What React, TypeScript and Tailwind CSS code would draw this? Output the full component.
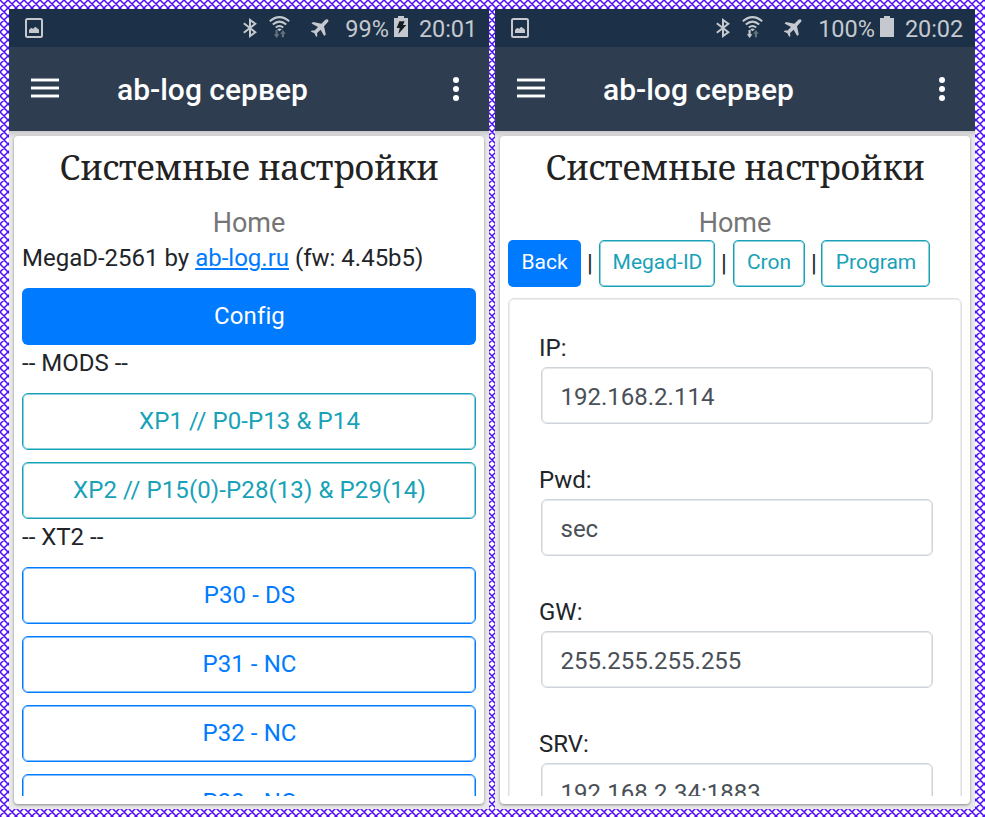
import type { ReactNode } from "react";

const info = "border border-[#17a2b8] text-[#17a2b8] shadow-[inset_0_0_0_1px_#17a2b880]";
const primary = "border border-[#007bff] text-[#007bff] shadow-[inset_0_0_0_1px_#007bff80]";

function Hatch() {
  return (
    <svg className="absolute inset-0 h-full w-full">
      <defs>
        <pattern id="hatch" width="8" height="8" patternUnits="userSpaceOnUse">
          <rect width="8" height="8" fill="#fff" />
          <path d="M-2 -2L10 10M10 -2L-2 10M-2 6L2 10M6 -2L10 2M-2 2L2 -2M6 10L10 6" stroke="#4d08ff" strokeWidth="1.5" />
        </pattern>
      </defs>
      <rect width="100%" height="100%" fill="url(#hatch)" />
    </svg>
  );
}

function PictureIcon() {
  return (
    <svg width="18" height="20" viewBox="0 0 18 20" fill="#c5c9cf">
      <rect x="1" y="1" width="16" height="18" rx="1.5" fill="none" stroke="#c5c9cf" strokeWidth="2" />
      <path d="M4 15v-3l2-2h1l1 1 2-2h1l1 1.5h1l1 1.5v3z" />
    </svg>
  );
}

function Bluetooth() {
  return (
    <svg width="14" height="20" viewBox="0 0 14 20" fill="none" stroke="#c5c9cf" strokeWidth="2">
      <path d="M.8 5.2L12.3 14.2 7 18V2L12.3 5.8.8 14.8" />
    </svg>
  );
}

function Wifi({ active }: { active: boolean }) {
  return (
    <svg width="21" height="22" viewBox="0 0 21 22" fill="none" stroke="#c5c9cf" strokeWidth="2">
      <path d="M.8 5.2Q10.5-3 20.2 5.2M3.8 8.6Q10.5 2.7 17.2 8.6M6.8 11.6Q10.5 8.4 14.2 11.6" />
      <path d="M8.2 13.2Q10.5 11.6 12.8 13.2L10.5 15.3z" fill="#c5c9cf" stroke="none" />
      <path d="M6.5 14h2.2v4.3h1.8L7.6 22 4.8 18.3h1.7z" fill={active ? "#c5c9cf" : "#64727f"} stroke="none" />
      <path d="M12.8 21.3h2.2v-3.6h1.8L13.9 14l-2.8 3.7h1.7z" fill="#64727f" stroke="none" />
    </svg>
  );
}

function Plane() {
  return (
    <svg width="19" height="18" viewBox="0 0 19 18" fill="#c5c9cf">
      <path d="M17.8.5Q19 1.4 17.9 3L14 7.2l1.8 8.3-1.6 1.6-3.6-6.4-3.5 3.4.2 2.8-1.1 1-1.8-3.6L.8 12.5l1-1.1 2.8.2L8 8.1 1.5 4.5l1.6-1.6 8.3 1.9L15.4.8Q16.8-.3 17.8.5z" />
    </svg>
  );
}

function Battery({ charging }: { charging: boolean }) {
  return (
    <svg width="14" height="21" viewBox="0 0 14 21" fill="#c5c9cf">
      <path d="M4 0h6v2h4v19H0V2h4z" />
      {charging && <path d="M5.4 5.2h5.3L8.9 9h3.4L4.4 18l1.3-5.9H2.6z" fill="#141c26" />}
    </svg>
  );
}

function Phone({ percent, time, charging, children }: { percent: string; time: string; charging: boolean; children: ReactNode }) {
  return (
    <section className="flex h-[800px] w-[480px] shrink-0 flex-col overflow-hidden bg-[#e9e9e9]">
      <div className="flex h-[38px] shrink-0 items-start bg-[#1c3147] pl-4 pr-3 text-[23.5px] leading-[38px] text-[#c5c9cf]">
        <div className="mr-auto pt-[9px]"><PictureIcon /></div>
        <div className="mr-3 pt-[9px]"><Bluetooth /></div>
        <div className="mr-5 pt-[7px]"><Wifi active={!charging} /></div>
        <div className="mr-4 pt-[10px]"><Plane /></div>
        <span className="mr-[5px] pt-px">{percent}</span>
        <div className="mr-[11px] pt-[7px]"><Battery charging={charging} /></div>
        <span className="pt-px tracking-[-0.1px]">{time}</span>
      </div>
      <header className="flex h-[84px] shrink-0 items-center bg-[#2e3e50] pl-[22px] pr-[30px] text-white">
        <svg width="28" height="22" viewBox="0 0 28 22" fill="#fff">
          <g fillOpacity=".45"><path d="M0 0h28v4H0zM0 8h28v4H0zM0 16h28v4H0z" /></g>
          <path d="M0 1h28v2H0zM0 9h28v2H0zM0 17h28v2H0z" />
        </svg>
        <h1 className="ml-[58px] mr-auto pt-[2px] text-[30px] font-medium leading-9">ab-log сервер</h1>
        <svg width="6" height="24" viewBox="0 0 6 24" fill="#fff">
          <circle cx="3" cy="3" r="3" /><circle cx="3" cy="12" r="3" /><circle cx="3" cy="21" r="3" />
        </svg>
      </header>
      <div className="min-h-0 flex-1 bg-linear-to-b from-[#c9c9c9] to-[#e9e9e9] to-[7px] px-[5px] pb-[5px] pt-[5px]">
        <main className="h-[668px] rounded-[4px] bg-white px-2 pb-2 shadow-[0_1px_3px_#0000006b]">
          <div className="h-[660px] overflow-hidden">
            <h2 className="h-[70px] whitespace-nowrap pt-[7px] text-center font-['Noto_Serif','DejaVu_Serif_Condensed','DejaVu_Serif',serif] text-[34px] leading-[48px] tracking-[-0.4px] text-[#222]">Системные настройки</h2>
            <p className="h-[34px] text-center text-[27px] leading-[34px] text-[#757575]">Home</p>
            {children}
          </div>
        </main>
      </div>
    </section>
  );
}

function WideButton({ label, tone }: { label: string; tone: string }) {
  return <button className={`mb-3 flex h-[57px] w-full items-center justify-center rounded-[6px] pb-[2px] pl-px tracking-[0.1px] ${tone}`}>{label}</button>;
}

function Group({ label }: { label: string }) {
  return <p className="-mt-3 mb-3 h-9 leading-9">{label}</p>;
}

function Bar() {
  return <span className="w-[18px] text-center text-2xl leading-[46px] text-[#212529]">|</span>;
}

function Field({ label, value }: { label: string; value: string }) {
  return (
    <div className="h-[132px]">
      <label className="-ml-px block h-[37px] leading-9">{label}</label>
      <div className="ml-px flex h-[57px] w-[392px] items-center rounded-[6px] border border-[#ced4da] pl-[18.5px] pt-[2px] text-[#495057] shadow-[inset_0_0_0_1px_#ced4da80]">{value}</div>
    </div>
  );
}

export default function App() {
  return (
    <div className="relative h-[817px] w-[985px] overflow-hidden font-[Roboto,sans-serif]">
      <Hatch />
      <div className="relative flex gap-[6px] p-[9px] text-2xl text-[#212529]">
        <Phone percent="99%" time="20:01" charging>
          <p className="mb-3 h-9 whitespace-nowrap leading-9">
            MegaD-2561 by <a className="text-[#007bff] underline decoration-[1.5px] underline-offset-2">ab-log.ru</a> (fw: 4.45b5)
          </p>
          <WideButton label="Config" tone="bg-[#007bff] text-white" />
          <Group label="-- MODS --" />
          <WideButton label="XP1 // P0-P13 & P14" tone={info} />
          <WideButton label="XP2 // P15(0)-P28(13) & P29(14)" tone={info} />
          <Group label="-- XT2 --" />
          <WideButton label="P30 - DS" tone={primary} />
          <WideButton label="P31 - NC" tone={primary} />
          <WideButton label="P32 - NC" tone={primary} />
          <WideButton label="P33 - NC" tone={primary} />
        </Phone>
        <Phone percent="100%" time="20:02" charging={false}>
          <div className="flex h-[47px] text-[21px] leading-[44px]">
            <button className="w-[73px] rounded-[5px] bg-[#007bff] pb-[3px] text-white">Back</button>
            <Bar />
            <button className={`w-[116px] rounded-[5px] pb-1 pl-px leading-[42px] ${info}`}>Megad-ID</button>
            <Bar />
            <button className={`w-[72px] rounded-[5px] pb-1 leading-[42px] ${info}`}>Cron</button>
            <span className="-mr-[2px] flex"><Bar /></span>
            <button className={`w-[109px] rounded-[5px] pb-1 pl-px leading-[42px] ${info}`}>Program</button>
          </div>
          <div className="mt-[11px] h-[620px] w-[454px] rounded-[6px] border border-[#dfdfdf] pl-[31px] pt-[31px] shadow-[inset_0_0_0_1px_#dfdfdf80]">
            <Field label="IP:" value="192.168.2.114" />
            <Field label="Pwd:" value="sec" />
            <Field label="GW:" value="255.255.255.255" />
            <Field label="SRV:" value="192.168.2.34:1883" />
          </div>
        </Phone>
      </div>
    </div>
  );
}
